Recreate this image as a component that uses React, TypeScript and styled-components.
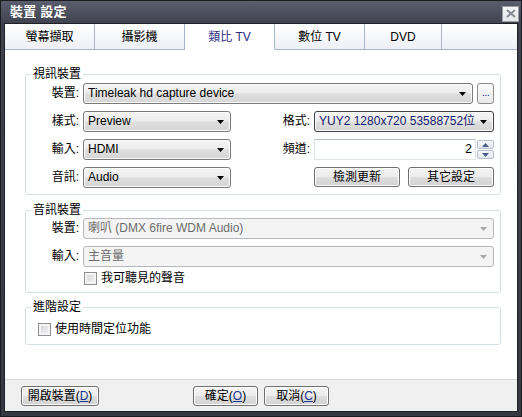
import React from 'react'
import styled, { createGlobalStyle } from 'styled-components'

const GlobalStyle = createGlobalStyle`
  html, body {
    margin: 0;
    padding: 0;
    background: #34363f;
  }
  #root {
    width: 522px;
    height: 417px;
  }
  * {
    box-sizing: border-box;
  }
`

const FONT = `"Liberation Sans", "Noto Sans CJK TC", sans-serif`

const Window = styled.div`
  width: 522px;
  height: 417px;
  display: flex;
  flex-direction: column;
  background: linear-gradient(#5a5d6c 0px, #40434f 22px, #363842 100%);
  border: 1px solid #1c1d22;
  font-family: ${FONT};
  font-size: 12px;
  line-height: 15px;
  color: #000;
`

const TitleBar = styled.div`
  height: 22px;
  display: flex;
  align-items: center;
  justify-content: space-between;
  padding: 0 2px 0 9px;
`

const Title = styled.div`
  color: #fff;
  font-weight: bold;
  font-size: 13px;
  line-height: 16px;
  letter-spacing: 0.2px;
`

const CloseButton = styled.div`
  width: 17px;
  height: 16px;
  margin-top: 3px;
  background: linear-gradient(#f6f6f8, #e6e7ec);
  border: 1px solid #9a9ca6;
  display: flex;
  align-items: center;
  justify-content: center;
`

const Client = styled.div`
  flex: 1;
  margin: 0 3px 4px 3px;
  border: 1px solid #1f2026;
  background: #fff;
  display: flex;
  flex-direction: column;
`

const TabStrip = styled.div`
  height: 26px;
  display: flex;
`

const Tab = styled.div<{ $active?: boolean; $w: number }>`
  width: ${p => p.$w}px;
  border-right: 1px solid #a7b4d2;
  border-bottom: 1px solid ${p => (p.$active ? '#fff' : '#a7b4d2')};
  background: ${p =>
    p.$active ? '#fff' : 'linear-gradient(#ffffff, #eef0f6)'};
  color: ${p => (p.$active ? '#2b2c84' : '#000')};
  display: flex;
  align-items: center;
  justify-content: center;
  font-size: 12px;
  padding-top: 1px;
`

const TabFiller = styled.div`
  flex: 1;
  border-bottom: 1px solid #a7b4d2;
  background: linear-gradient(#ffffff, #eef0f6);
`

const Panel = styled.div`
  flex: 1;
  padding: 17px 16px 0 20px;
  display: flex;
  flex-direction: column;
`

const Group = styled.fieldset<{ $top?: number; $pad: string }>`
  margin: ${p => p.$top || 0}px 0 0 0;
  padding: ${p => p.$pad};
  border: 1px solid #d5dfe5;
  border-radius: 3px;
  min-width: 0;
`

const Legend = styled.legend`
  padding: 0 2px;
  margin-left: -2px;
  font-size: 12px;
  line-height: 15px;
`

const FormGrid = styled.div<{ $cols: string }>`
  display: grid;
  grid-template-columns: ${p => p.$cols};
  grid-auto-rows: 21px;
  column-gap: 4px;
  row-gap: 7px;
`

const Label = styled.div`
  display: flex;
  align-items: center;
  justify-content: flex-end;
  white-space: nowrap;
`

const Span = styled.div<{ $from: number; $to: number }>`
  grid-column: ${p => p.$from} / ${p => p.$to};
  display: flex;
  gap: 4px;
  min-width: 0;
`

const ButtonPair = styled.div`
  display: flex;
  justify-content: space-between;
`

const Combo = styled.div<{ $disabled?: boolean; $focused?: boolean }>`
  flex: 1;
  min-width: 0;
  height: 21px;
  display: flex;
  align-items: center;
  padding: 0 6px 0 4px;
  border: 1px solid
    ${p => (p.$disabled ? '#b5b8bd' : p.$focused ? '#3f4350' : '#7a7a7a')};
  border-radius: 3px;
  background: ${p =>
    p.$disabled
      ? '#f4f4f4'
      : 'linear-gradient(#f4f4f4 0%, #ececec 48%, #dedede 52%, #d6d6d6 100%)'};
  box-shadow: ${p => (p.$disabled ? 'none' : 'inset 0 0 0 1px #fbfbfb')};
  color: ${p => (p.$disabled ? '#6d6d6d' : p.$focused ? '#17206a' : '#000')};
`

const ComboText = styled.span`
  flex: 1;
  white-space: nowrap;
  overflow: hidden;
`

const Arrow: React.FC<{ color?: string }> = ({ color = '#000' }) => (
  <svg width="7" height="4" viewBox="0 0 7 4" style={{ marginLeft: 4, flex: 'none' }}>
    <path d="M0 0h7L3.5 4z" fill={color} />
  </svg>
)

const DotsButton = styled.div`
  width: 17px;
  height: 21px;
  border: 1px solid #8a8a8a;
  border-radius: 3px;
  background: linear-gradient(#fafafa, #eaeaea);
  color: #1d3a9a;
  font-size: 11px;
  display: flex;
  align-items: flex-end;
  justify-content: center;
  padding-bottom: 3px;
  letter-spacing: -0.5px;
`

const SpinBox = styled.div`
  display: flex;
  height: 21px;
`

const SpinInput = styled.div`
  flex: 1;
  border: 1px solid #dde4ea;
  border-top-color: #b8c0c8;
  display: flex;
  align-items: center;
  justify-content: flex-end;
  padding-right: 3px;
`

const SpinButtons = styled.div`
  width: 18px;
  display: flex;
  flex-direction: column;
  gap: 1px;
  padding: 1px 0 1px 1px;
`

const SpinBtn = styled.div`
  flex: 1;
  border: 1px solid #b6c0cc;
  border-radius: 2px;
  background: linear-gradient(#f6f7f9, #e3e7ed);
  display: flex;
  align-items: center;
  justify-content: center;
`

const PushButton = styled.div<{ $w: number }>`
  width: ${p => p.$w}px;
  height: 20px;
  border: 1px solid #707070;
  border-radius: 3px;
  background: linear-gradient(#f4f4f4 0%, #ececec 48%, #dedede 52%, #d2d2d2 100%);
  box-shadow: inset 0 0 0 1px #fcfcfc;
  display: flex;
  align-items: center;
  justify-content: center;
  white-space: nowrap;
`

const Mnemonic = styled.span`
  color: #1c3590;
  text-decoration: underline;
  text-underline-offset: 1px;
`

const CheckRow = styled.label<{ $indent: number; $top?: number }>`
  display: flex;
  align-items: center;
  gap: 4px;
  margin: ${p => p.$top || 0}px 0 0 ${p => p.$indent}px;
  height: 13px;
`

const CheckBox = styled.span`
  width: 13px;
  height: 13px;
  border: 1px solid #8e8f8f;
  background: linear-gradient(135deg, #d2d3d6, #f5f5f6);
  box-shadow: inset 0 0 0 2px #f4f4f4;
  flex: none;
`

const Footer = styled.div`
  height: 32px;
  border-top: 1px solid #d8dadd;
  background: #f0f0f0;
  display: flex;
  align-items: flex-start;
  padding: 6px 0 0 16px;
  gap: 6px;
`

const FooterGap = styled.div`
  width: 82px;
`

const tabs = [
  { label: '螢幕擷取', w: 90 },
  { label: '攝影機', w: 90 },
  { label: '類比 TV', w: 90, active: true },
  { label: '數位 TV', w: 90 },
  { label: 'DVD', w: 77 },
]

const App: React.FC = () => {
  return (
    <>
      <GlobalStyle />
      <Window>
        <TitleBar>
          <Title>裝置 設定</Title>
          <CloseButton>
            <svg width="10" height="9" viewBox="0 0 10 9">
              <path d="M1 1l8 7M9 1L1 8" stroke="#8b8d96" strokeWidth="2" />
            </svg>
          </CloseButton>
        </TitleBar>
        <Client>
          <TabStrip>
            {tabs.map(t => (
              <Tab key={t.label} $w={t.w} $active={t.active}>
                {t.label}
              </Tab>
            ))}
            <TabFiller />
          </TabStrip>
          <Panel>
            <Group $pad="1px 6px 6px 7px">
              <Legend>視訊裝置</Legend>
              <FormGrid $cols="46px 148px 75px 180px">
                <Label>裝置:</Label>
                <Span $from={2} $to={5}>
                  <Combo>
                    <ComboText>Timeleak hd capture device</ComboText>
                    <Arrow />
                  </Combo>
                  <DotsButton>...</DotsButton>
                </Span>

                <Label>樣式:</Label>
                <Combo>
                  <ComboText>Preview</ComboText>
                  <Arrow />
                </Combo>
                <Label>格式:</Label>
                <Combo $focused>
                  <ComboText>YUY2 1280x720 53588752位</ComboText>
                  <Arrow />
                </Combo>

                <Label>輸入:</Label>
                <Combo>
                  <ComboText>HDMI</ComboText>
                  <Arrow />
                </Combo>
                <Label>頻道:</Label>
                <SpinBox>
                  <SpinInput>2</SpinInput>
                  <SpinButtons>
                    <SpinBtn>
                      <svg width="7" height="4" viewBox="0 0 7 4">
                        <path d="M3.5 0L7 4H0z" fill="#4a5f86" />
                      </svg>
                    </SpinBtn>
                    <SpinBtn>
                      <svg width="7" height="4" viewBox="0 0 7 4">
                        <path d="M0 0h7L3.5 4z" fill="#4a5f86" />
                      </svg>
                    </SpinBtn>
                  </SpinButtons>
                </SpinBox>

                <Label>音訊:</Label>
                <Combo>
                  <ComboText>Audio</ComboText>
                  <Arrow />
                </Combo>
                <div />
                <ButtonPair>
                  <PushButton $w={86}>檢測更新</PushButton>
                  <PushButton $w={86}>其它設定</PushButton>
                </ButtonPair>
              </FormGrid>
            </Group>

            <Group $top={8} $pad="0 6px 7px 7px">
              <Legend>音訊裝置</Legend>
              <FormGrid $cols="46px 1fr">
                <Label>裝置:</Label>
                <Combo $disabled>
                  <ComboText>喇叭 (DMX 6fire WDM Audio)</ComboText>
                  <Arrow color="#a8a8a8" />
                </Combo>
                <Label>輸入:</Label>
                <Combo $disabled>
                  <ComboText>主音量</ComboText>
                  <Arrow color="#a8a8a8" />
                </Combo>
              </FormGrid>
              <CheckRow $indent={51} $top={5}>
                <CheckBox />
                我可聽見的聲音
              </CheckRow>
            </Group>

            <Group $top={7} $pad="8px 6px 8px 7px">
              <Legend>進階設定</Legend>
              <CheckRow $indent={5}>
                <CheckBox />
                使用時間定位功能
              </CheckRow>
            </Group>
          </Panel>
          <Footer>
            <PushButton $w={78}>
              開啟裝置(<Mnemonic>D</Mnemonic>)
            </PushButton>
            <FooterGap />
            <PushButton $w={65}>
              確定(<Mnemonic>O</Mnemonic>)
            </PushButton>
            <PushButton $w={65}>
              取消(<Mnemonic>C</Mnemonic>)
            </PushButton>
          </Footer>
        </Client>
      </Window>
    </>
  )
}

export default App
